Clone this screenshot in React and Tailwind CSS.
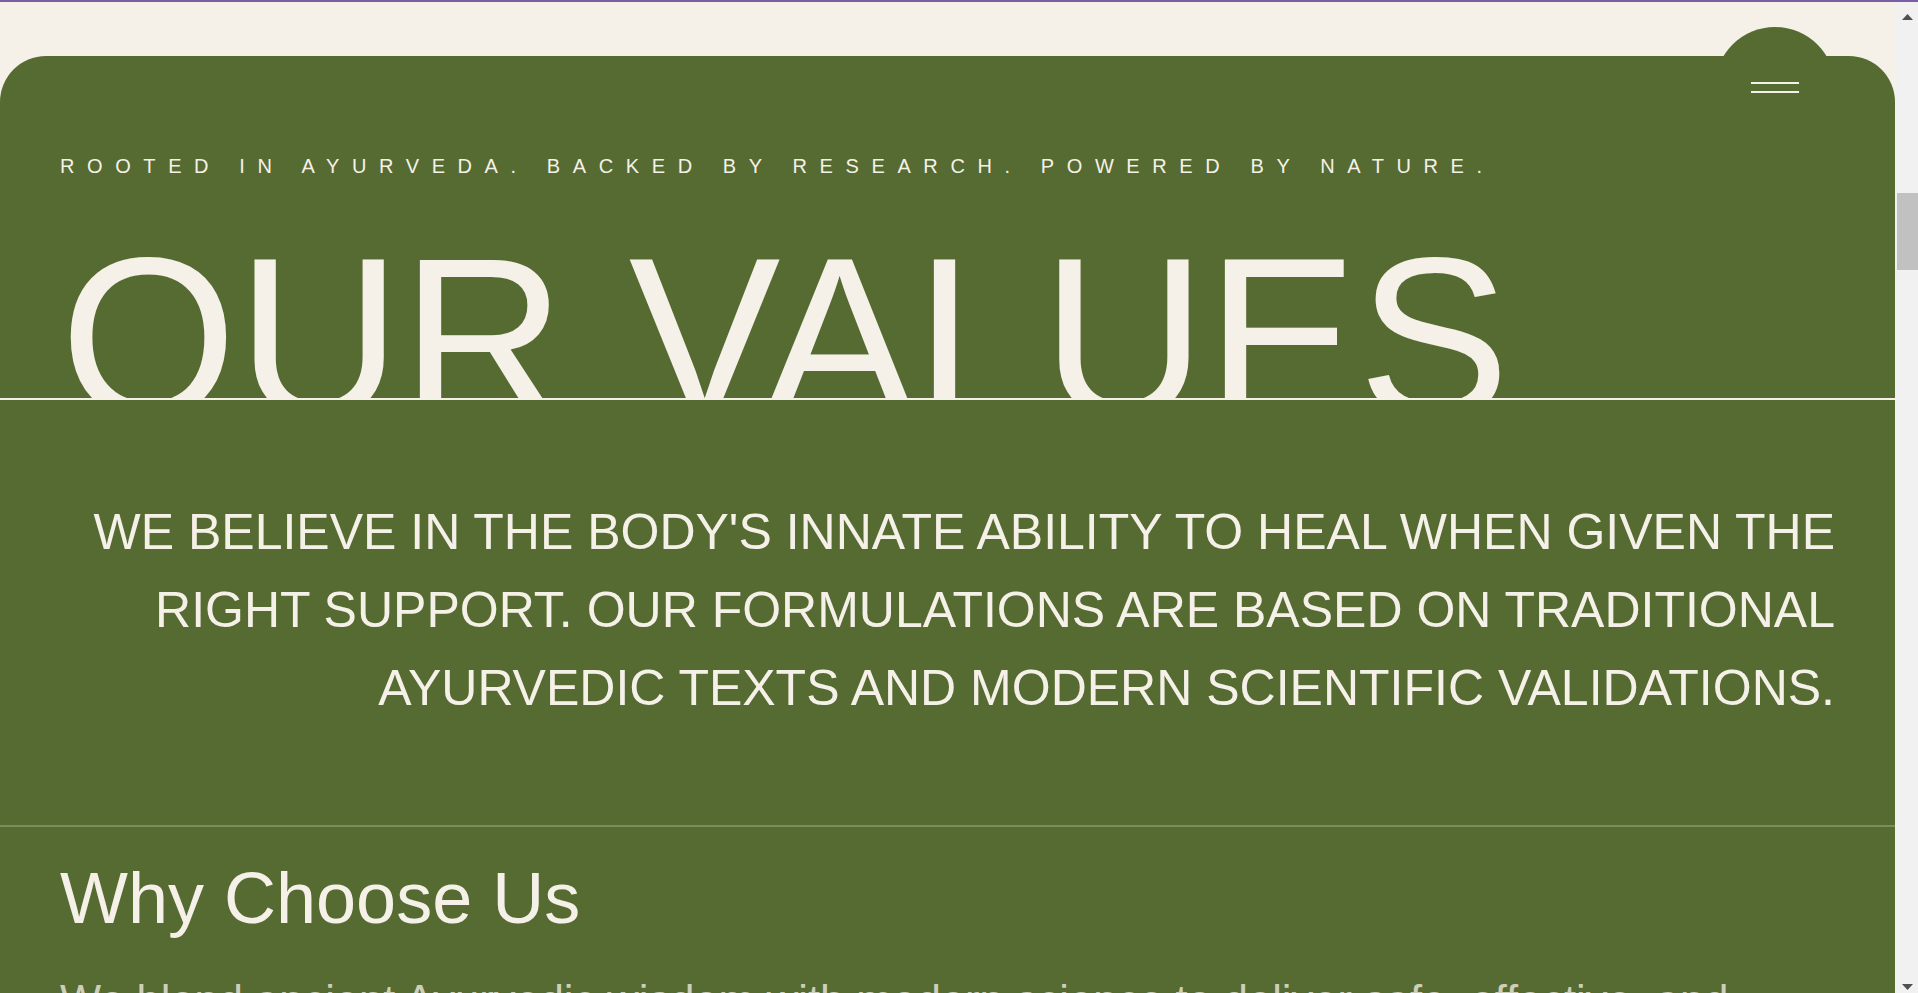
import React from 'react'

const cream = 'text-[#f5f1e8]'

const ScrollArrow = ({ down }) => (
    <svg width="11" height="6" viewBox="0 0 11 6" className={down ? 'rotate-180' : ''}>
        <path d="M0 6 L5.5 0 L11 6 Z" fill="#505050" />
    </svg>
)

const MenuBubble = () => (
    <button className="absolute right-[60px] top-[-29px] w-[120px] h-[120px] rounded-full bg-[#566b31] flex flex-col items-center justify-center gap-[7px]">
        <span className="block w-[48px] h-[2px] bg-[#f5f1e8]" />
        <span className="block w-[48px] h-[2px] bg-[#f5f1e8]" />
    </button>
)

export default function App() {
    return (
        <div className="h-[993px] overflow-hidden flex flex-col bg-[#f5f1e8] font-['Liberation_Sans',Arial,sans-serif]">
            <div className="h-[2px] shrink-0 bg-[#7b5ea7]" />
            <div className="flex flex-1 min-h-0">
                <main className="flex-1 min-w-0 pt-[54px]">
                    <section className={'relative rounded-t-[46px] bg-[#566b31] ' + cream}>
                        <MenuBubble />

                        <p className="pt-[100px] px-[60px] text-[20px] leading-none tracking-[12.6px] uppercase whitespace-nowrap">
                            Rooted in Ayurveda. Backed by research. Powered by nature.
                        </p>

                        {/* big title is cut by the rule on purpose */}
                        <div className="mt-[48px] h-[176px] overflow-hidden border-b-2 border-[#f5f1e8] pt-[1px] px-[60px]">
                            <h1 className="text-[227.5px] leading-none font-normal whitespace-nowrap">OUR VALUES</h1>
                        </div>

                        <div className="pt-[93px] pb-[98px] px-[60px] border-b-2 border-[#f5f1e8]/25">
                            <p className="text-right text-[50px] leading-[78px] uppercase">
                                We believe in the body's innate ability to heal when given the right support. Our formulations are based on traditional Ayurvedic texts and modern scientific validations.
                            </p>
                        </div>

                        <div className="pt-[35px] px-[60px] pb-20">
                            <h2 className="text-[72px] leading-none font-normal">Why Choose Us</h2>
                            <p className="mt-[33px] text-[43.5px] leading-[1.6] text-[#f5f1e8]/75">
                                We blend ancient Ayurvedic wisdom with modern science to deliver safe, effective, and natural wellness solutions for everyday life and long-term vitality.
                            </p>
                        </div>
                    </section>
                </main>

                <aside className="w-[23px] shrink-0 bg-[#f1f1f1] flex flex-col">
                    <div className="h-[30px] flex items-center justify-center pl-[1px]">
                        <ScrollArrow />
                    </div>
                    <div className="mt-[161px] h-[77px] ml-[2px] bg-[#c1c1c1]" />
                    <div className="flex-1" />
                    <div className="h-[12px] flex items-center justify-center pl-[1px]">
                        <ScrollArrow down />
                    </div>
                </aside>
            </div>
        </div>
    )
}
